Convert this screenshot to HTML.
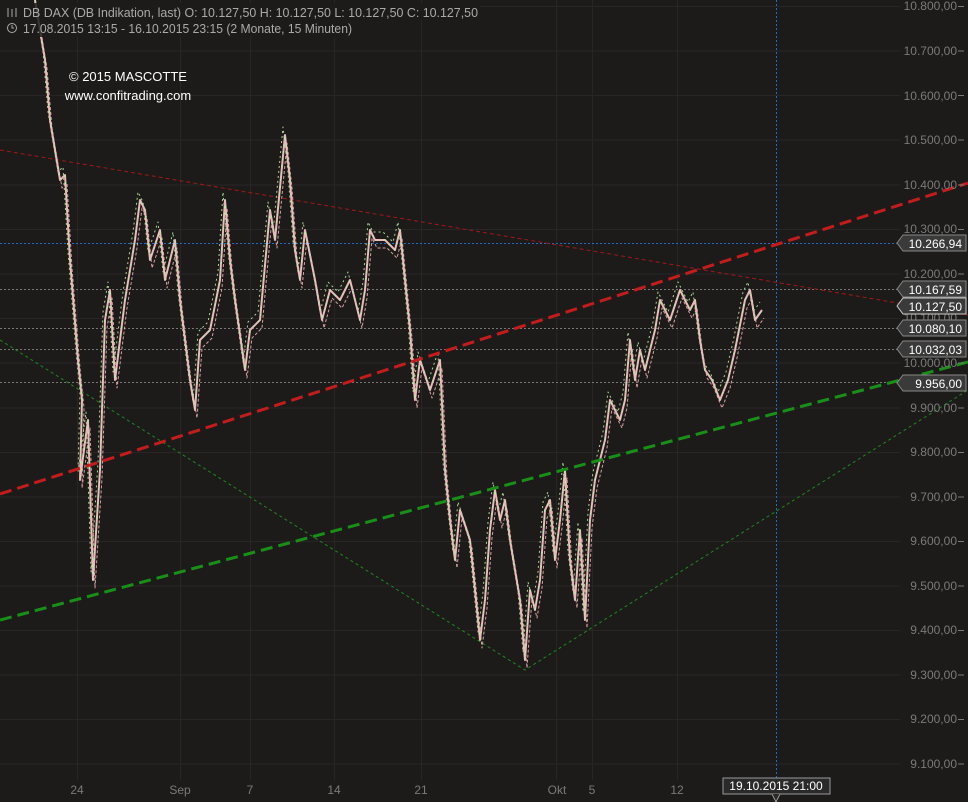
<!DOCTYPE html>
<html><head><meta charset="utf-8"><style>
body{margin:0;background:#1c1b1a;width:968px;height:802px;overflow:hidden;font-family:"Liberation Sans",sans-serif}
svg{display:block}
</style></head><body>
<svg width="968" height="802" xmlns="http://www.w3.org/2000/svg" font-family="Liberation Sans, sans-serif">
<defs>
<polyline id="p" fill="none" stroke-linejoin="round" points="35,0 45,60 50,120 60,180 65,175 70,260 78,360 82,400 80,480 88,420 93,580 100,470 105,320 110,290 115,380 125,300 135,240 140,200 145,210 150,260 160,230 165,280 175,240 180,300 185,340 190,380 195,410 200,340 210,330 220,280 225,200 230,260 235,300 245,370 250,330 260,320 270,210 275,240 285,135 290,180 295,250 300,280 305,230 315,280 322,320 330,290 340,300 350,280 360,320 365,290 370,230 375,240 385,240 395,250 400,230 405,280 410,330 415,400 420,360 430,390 440,360 445,470 450,520 455,560 460,510 470,540 480,640 485,600 490,530 495,490 500,520 505,500 510,540 515,570 520,600 525,660 530,590 535,610 540,580 545,510 550,500 555,560 560,520 565,470 570,560 575,600 580,530 585,620 590,520 595,480 600,460 605,440 610,400 620,420 625,400 630,340 635,380 640,350 645,370 655,330 660,300 670,320 680,290 690,310 695,300 700,340 705,370 712,380 720,400 728,380 735,350 745,300 750,290 755,320 762,310"/>
</defs>
<rect width="968" height="802" fill="#1c1b1a"/>
<g stroke="#272625" stroke-width="1">
<line x1="0" y1="6.5" x2="900" y2="6.5"/><line x1="0" y1="51" x2="900" y2="51"/><line x1="0" y1="95.5" x2="900" y2="95.5"/><line x1="0" y1="140" x2="900" y2="140"/><line x1="0" y1="185" x2="900" y2="185"/><line x1="0" y1="229.5" x2="900" y2="229.5"/><line x1="0" y1="274" x2="900" y2="274"/><line x1="0" y1="318.5" x2="900" y2="318.5"/><line x1="0" y1="363" x2="900" y2="363"/><line x1="0" y1="408" x2="900" y2="408"/><line x1="0" y1="452.5" x2="900" y2="452.5"/><line x1="0" y1="497" x2="900" y2="497"/><line x1="0" y1="541.5" x2="900" y2="541.5"/><line x1="0" y1="586" x2="900" y2="586"/><line x1="0" y1="630.5" x2="900" y2="630.5"/><line x1="0" y1="675" x2="900" y2="675"/><line x1="0" y1="719.5" x2="900" y2="719.5"/><line x1="0" y1="764" x2="900" y2="764"/>
<line x1="77.5" y1="0" x2="77.5" y2="780"/><line x1="180.5" y1="0" x2="180.5" y2="780"/><line x1="250.5" y1="0" x2="250.5" y2="780"/><line x1="334.5" y1="0" x2="334.5" y2="780"/><line x1="421.5" y1="0" x2="421.5" y2="780"/><line x1="556.5" y1="0" x2="556.5" y2="780"/><line x1="592.5" y1="0" x2="592.5" y2="780"/><line x1="677.5" y1="0" x2="677.5" y2="780"/>
</g>
<g stroke="#777" stroke-width="1" stroke-dasharray="2,2" fill="none">
<line x1="0" y1="289.5" x2="897" y2="289.5"/><line x1="0" y1="328.5" x2="897" y2="328.5"/><line x1="0" y1="349.5" x2="897" y2="349.5"/><line x1="0" y1="382.5" x2="897" y2="382.5"/>
</g>
<g stroke="#1e6fc4" stroke-width="1" stroke-dasharray="2,2">
<line x1="0" y1="243.5" x2="897" y2="243.5"/><line x1="776.5" y1="0" x2="776.5" y2="780"/>
</g>
<line x1="0" y1="150" x2="968" y2="315" stroke="#a01818" stroke-width="1" stroke-dasharray="4,3"/>
<polyline points="0,340 525,670 968,390" fill="none" stroke="#1c8a1c" stroke-width="1" stroke-dasharray="3,3"/>
<use href="#p" stroke="#d9a0a0" stroke-width="1" stroke-dasharray="3,2" transform="translate(2,8)"/>
<use href="#p" stroke="#a8d890" stroke-width="1" stroke-dasharray="2,3" transform="translate(-2,-8)"/>
<use href="#p" stroke="#e9b8b8" stroke-width="2"/>
<use href="#p" stroke="#b8f0a8" stroke-width="1" stroke-dasharray="2,5"/>
<line x1="0" y1="494" x2="968" y2="183" stroke="#c41c1c" stroke-width="3" stroke-dasharray="12,6"/>
<line x1="0" y1="620" x2="968" y2="362" stroke="#189018" stroke-width="3" stroke-dasharray="12,6"/>
<g fill="#7a7a7a" font-size="12" text-anchor="end">
<text x="957" y="10">10.800,00</text><text x="957" y="55">10.700,00</text><text x="957" y="100">10.600,00</text><text x="957" y="144">10.500,00</text><text x="957" y="189">10.400,00</text><text x="957" y="233">10.300,00</text><text x="957" y="278">10.200,00</text><text x="957" y="322">10.100,00</text><text x="957" y="367">10.000,00</text><text x="957" y="412">9.900,00</text><text x="957" y="456">9.800,00</text><text x="957" y="501">9.700,00</text><text x="957" y="545">9.600,00</text><text x="957" y="590">9.500,00</text><text x="957" y="634">9.400,00</text><text x="957" y="679">9.300,00</text><text x="957" y="723">9.200,00</text><text x="957" y="768">9.100,00</text>
</g>
<g stroke="#7a7a7a"><line x1="958" y1="6.5" x2="964" y2="6.5"/><line x1="958" y1="51" x2="964" y2="51"/><line x1="958" y1="95.5" x2="964" y2="95.5"/><line x1="958" y1="140" x2="964" y2="140"/><line x1="958" y1="185" x2="964" y2="185"/><line x1="958" y1="229.5" x2="964" y2="229.5"/><line x1="958" y1="274" x2="964" y2="274"/><line x1="958" y1="363" x2="964" y2="363"/><line x1="958" y1="408" x2="964" y2="408"/><line x1="958" y1="452.5" x2="964" y2="452.5"/><line x1="958" y1="497" x2="964" y2="497"/><line x1="958" y1="541.5" x2="964" y2="541.5"/><line x1="958" y1="586" x2="964" y2="586"/><line x1="958" y1="630.5" x2="964" y2="630.5"/><line x1="958" y1="675" x2="964" y2="675"/><line x1="958" y1="719.5" x2="964" y2="719.5"/><line x1="958" y1="764" x2="964" y2="764"/></g>
<g font-size="12" fill="#fff">
<g transform="translate(0,243)"><path d="M897,0 L903,-8 H966 V8 H903 Z" fill="#3a3a3a" stroke="#888"/><text x="962" y="5" text-anchor="end">10.266,94</text></g>
<g transform="translate(0,289)"><path d="M897,0 L903,-8 H966 V8 H903 Z" fill="#3a3a3a" stroke="#888"/><text x="962" y="5" text-anchor="end">10.167,59</text></g>
<g transform="translate(0,306)"><path d="M897,0 L903,-8 H966 V8 H903 Z" fill="#3a3a3a" stroke="#ccc"/><text x="962" y="5" text-anchor="end">10.127,50</text></g>
<g transform="translate(0,328)"><path d="M897,0 L903,-8 H966 V8 H903 Z" fill="#3a3a3a" stroke="#888"/><text x="962" y="5" text-anchor="end">10.080,10</text></g>
<g transform="translate(0,349)"><path d="M897,0 L903,-8 H966 V8 H903 Z" fill="#3a3a3a" stroke="#888"/><text x="962" y="5" text-anchor="end">10.032,03</text></g>
<g transform="translate(0,383)"><path d="M897,0 L903,-8 H966 V8 H903 Z" fill="#3a3a3a" stroke="#888"/><text x="962" y="5" text-anchor="end">9.956,00</text></g>
</g>
<g fill="#7a7a7a" font-size="12" text-anchor="middle">
<text x="77" y="794">24</text><text x="180" y="794">Sep</text><text x="250" y="794">7</text><text x="334" y="794">14</text><text x="421" y="794">21</text><text x="557" y="794">Okt</text><text x="592" y="794">5</text><text x="677" y="794">12</text>
</g>
<rect x="723" y="778" width="107" height="16" fill="#2a2a2a" stroke="#999"/>
<path d="M772,794 L776,802 L780,794" fill="#2a2a2a" stroke="#999"/>
<text x="776" y="790" fill="#fff" font-size="12" text-anchor="middle">19.10.2015 21:00</text>
<rect x="0" y="3" width="480" height="17" fill="#1c1b1a" opacity="0.85"/>
<rect x="0" y="20" width="358" height="17" fill="#1c1b1a" opacity="0.85"/>
<g fill="#aaa" font-size="12.5">
<text x="23" y="17" textLength="455" lengthAdjust="spacingAndGlyphs">DB DAX (DB Indikation, last)  O: 10.127,50  H: 10.127,50  L: 10.127,50  C: 10.127,50</text>
<text x="23" y="33" textLength="329" lengthAdjust="spacingAndGlyphs">17.08.2015 13:15 - 16.10.2015 23:15 (2 Monate, 15 Minuten)</text>
</g>
<g stroke="#aaa" fill="none" stroke-width="1"><line x1="8" y1="8" x2="8" y2="17"/><line x1="12" y1="9" x2="12" y2="17"/><line x1="16" y1="8" x2="16" y2="17"/><circle cx="12" cy="28" r="4.5"/><path d="M12,25 V28 H14"/></g>
<g fill="#fff" font-size="13" text-anchor="middle">
<text x="128" y="81">© 2015 MASCOTTE</text>
<text x="128" y="100">www.confitrading.com</text>
</g>
</svg>
</body></html>
